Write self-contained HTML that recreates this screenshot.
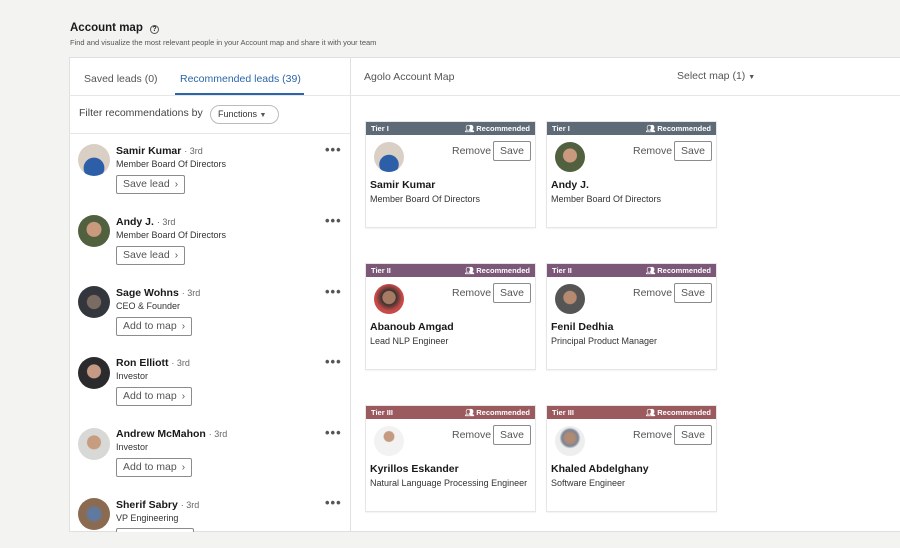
<!DOCTYPE html>
<html><head><style>
*{box-sizing:border-box;margin:0;padding:0}
body{width:900px;height:548px;background:#f3f3f2;font-family:"Liberation Sans",sans-serif;color:#191919;position:relative;overflow:hidden}
.abs{position:absolute}
.panel{left:69px;top:57px;width:840px;height:475px;background:#fff;border:1px solid #e0e0e0}
.av{position:absolute;width:32px;height:32px;border-radius:50%;overflow:hidden}
.btn{position:absolute;border:1px solid #8c8c8c;border-radius:2px;font-size:10.5px;color:#555;padding:0 6px;height:19px;line-height:17px;background:#fff}
.btn b{font-weight:normal;font-size:10px;margin-left:5px}
.dots{position:absolute;font-size:13px;letter-spacing:1px;color:#555;font-weight:bold}
.card{position:absolute;width:171px;height:107px;background:#fff;border:1px solid #e6e6e6;box-shadow:0 1px 1px rgba(0,0,0,.05)}
.hd{height:13px;color:#fff;font-size:7.5px;font-weight:bold;padding:0 5px;line-height:13px;display:flex;justify-content:space-between}
.card .av{left:8px;top:20px;width:30px;height:30px}
.rm{position:absolute;left:86px;top:23px;font-size:10.5px;color:#555}
.sv{position:absolute;left:127px;top:19px;border:1px solid #8c8c8c;border-radius:2px;font-size:10.5px;color:#555;width:38px;height:20px;line-height:18px;text-align:center}
.cn{position:absolute;left:4px;top:57px;font-size:10.5px;font-weight:bold}
.ct{position:absolute;left:4px;top:72px;font-size:9px;color:#333}
.nm{position:absolute;left:116px;font-size:10.5px;font-weight:bold}
.nm span{font-weight:normal;color:#666;font-size:9px}
.tt{position:absolute;left:116px;font-size:9px;color:#333}
</style></head><body>
<div class="abs" style="left:70px;top:22px;font-size:11.5px;font-weight:bold">Account map <span style="display:inline-block;width:9px;height:9px;border:1px solid #555;border-radius:50%;font-size:7px;text-align:center;line-height:8px;margin-left:4px;font-weight:bold">?</span></div>
<div class="abs" style="left:70px;top:38px;font-size:7.5px;color:#555">Find and visualize the most relevant people in your Account map and share it with your team</div>
<div class="abs panel"></div>
<div class="abs" style="left:350px;top:57px;width:1px;height:475px;background:#e0e0e0"></div>
<div class="abs" style="left:69px;top:95px;width:281px;height:1px;background:#e6e6e6"></div>
<div class="abs" style="left:350px;top:95px;width:550px;height:1px;background:#e6e6e6"></div>
<div class="abs" style="left:69px;top:133px;width:281px;height:1px;background:#e6e6e6"></div>
<div class="abs" style="left:84px;top:73px;font-size:10.5px;color:#555">Saved leads (0)</div>
<div class="abs" style="left:180px;top:73px;font-size:10.5px;color:#2c66a8">Recommended leads (39)</div>
<div class="abs" style="left:175px;top:93px;width:129px;height:2px;background:#2c66a8"></div>
<div class="abs" style="left:79px;top:107px;font-size:10.5px;color:#444">Filter recommendations by</div>
<div class="abs" style="left:210px;top:105px;width:69px;height:19px;border:1px solid #bbb;border-radius:10px;font-size:9px;color:#333;padding-left:7px;line-height:17px">Functions <span style="font-size:7px;color:#555">▼</span></div>
<div class="abs" style="left:364px;top:71px;font-size:10.5px;color:#555">Agolo Account Map</div>
<div class="abs" style="left:677px;top:70px;font-size:10.5px;color:#555">Select map (1) <span style="font-size:7px">▼</span></div>

<div class="av" style="left:78px;top:144px;background:radial-gradient(circle at 50% 75%,#2d5fa8 35%,#d9cfc5 37%)"></div>
<div class="nm" style="top:145px">Samir Kumar <span>· 3rd</span></div><div class="tt" style="top:159px">Member Board Of Directors</div>
<div class="btn" style="left:116px;top:175px">Save lead<b>›</b></div><div class="dots" style="left:325px;top:142px">•••</div>

<div class="av" style="left:78px;top:215px;background:radial-gradient(circle at 50% 45%,#c99a7e 30%,#51603f 33%)"></div>
<div class="nm" style="top:216px">Andy J. <span>· 3rd</span></div><div class="tt" style="top:230px">Member Board Of Directors</div>
<div class="btn" style="left:116px;top:246px">Save lead<b>›</b></div><div class="dots" style="left:325px;top:213px">•••</div>

<div class="av" style="left:78px;top:286px;background:radial-gradient(circle at 50% 50%,#7a6c62 30%,#33363d 33%)"></div>
<div class="nm" style="top:287px">Sage Wohns <span>· 3rd</span></div><div class="tt" style="top:301px">CEO &amp; Founder</div>
<div class="btn" style="left:116px;top:317px">Add to map<b>›</b></div><div class="dots" style="left:325px;top:284px">•••</div>

<div class="av" style="left:78px;top:357px;background:radial-gradient(circle at 50% 45%,#c49a85 28%,#2b2b2e 31%)"></div>
<div class="nm" style="top:357px">Ron Elliott <span>· 3rd</span></div><div class="tt" style="top:371px">Investor</div>
<div class="btn" style="left:116px;top:387px">Add to map<b>›</b></div><div class="dots" style="left:325px;top:354px">•••</div>

<div class="av" style="left:78px;top:428px;background:radial-gradient(circle at 50% 45%,#c79d7f 28%,#d8d8d6 31%)"></div>
<div class="nm" style="top:428px">Andrew McMahon <span>· 3rd</span></div><div class="tt" style="top:442px">Investor</div>
<div class="btn" style="left:116px;top:458px">Add to map<b>›</b></div><div class="dots" style="left:325px;top:425px">•••</div>

<div class="av" style="left:78px;top:498px;background:radial-gradient(circle at 50% 50%,#5f7aa0 25%,#8b6a52 40%)"></div>
<div class="nm" style="top:499px">Sherif Sabry <span>· 3rd</span></div><div class="tt" style="top:513px">VP Engineering</div>
<div class="btn" style="left:116px;top:528px;width:78px;height:6px"></div><div class="dots" style="left:325px;top:495px">•••</div>
<div class="abs" style="left:0;top:532px;width:900px;height:16px;background:#f3f3f2"></div>

<div class="card" style="left:365px;top:121px"><div class="hd" style="background:#5e6a75"><span>Tier I</span><span>👥︎ Recommended</span></div>
<div class="av" style="background:radial-gradient(circle at 50% 75%,#2d5fa8 35%,#d9cfc5 37%)"></div><div class="rm">Remove</div><div class="sv">Save</div>
<div class="cn">Samir Kumar</div><div class="ct">Member Board Of Directors</div></div>
<div class="card" style="left:546px;top:121px"><div class="hd" style="background:#5e6a75"><span>Tier I</span><span>👥︎ Recommended</span></div>
<div class="av" style="background:radial-gradient(circle at 50% 45%,#c99a7e 30%,#51603f 33%)"></div><div class="rm">Remove</div><div class="sv">Save</div>
<div class="cn">Andy J.</div><div class="ct">Member Board Of Directors</div></div>

<div class="card" style="left:365px;top:263px"><div class="hd" style="background:#7b5878"><span>Tier II</span><span>👥︎ Recommended</span></div>
<div class="av" style="background:radial-gradient(circle at 50% 45%,#a77a63 28%,#3a3330 32%,#c74a48 60%)"></div><div class="rm">Remove</div><div class="sv">Save</div>
<div class="cn">Abanoub Amgad</div><div class="ct">Lead NLP Engineer</div></div>
<div class="card" style="left:546px;top:263px"><div class="hd" style="background:#7b5878"><span>Tier II</span><span>👥︎ Recommended</span></div>
<div class="av" style="background:radial-gradient(circle at 50% 45%,#b58a70 28%,#555 32%)"></div><div class="rm">Remove</div><div class="sv">Save</div>
<div class="cn">Fenil Dedhia</div><div class="ct">Principal Product Manager</div></div>

<div class="card" style="left:365px;top:405px"><div class="hd" style="background:#9a5a5e"><span>Tier III</span><span>👥︎ Recommended</span></div>
<div class="av" style="background:radial-gradient(circle at 50% 35%,#c49a80 20%,#f2f2f2 24%)"></div><div class="rm">Remove</div><div class="sv">Save</div>
<div class="cn">Kyrillos Eskander</div><div class="ct">Natural Language Processing Engineer</div></div>
<div class="card" style="left:546px;top:405px"><div class="hd" style="background:#9a5a5e"><span>Tier III</span><span>👥︎ Recommended</span></div>
<div class="av" style="background:radial-gradient(circle at 50% 40%,#b08a72 20%,#7b8596 35%,#eee 45%)"></div><div class="rm">Remove</div><div class="sv">Save</div>
<div class="cn">Khaled Abdelghany</div><div class="ct">Software Engineer</div></div>
</body></html>
